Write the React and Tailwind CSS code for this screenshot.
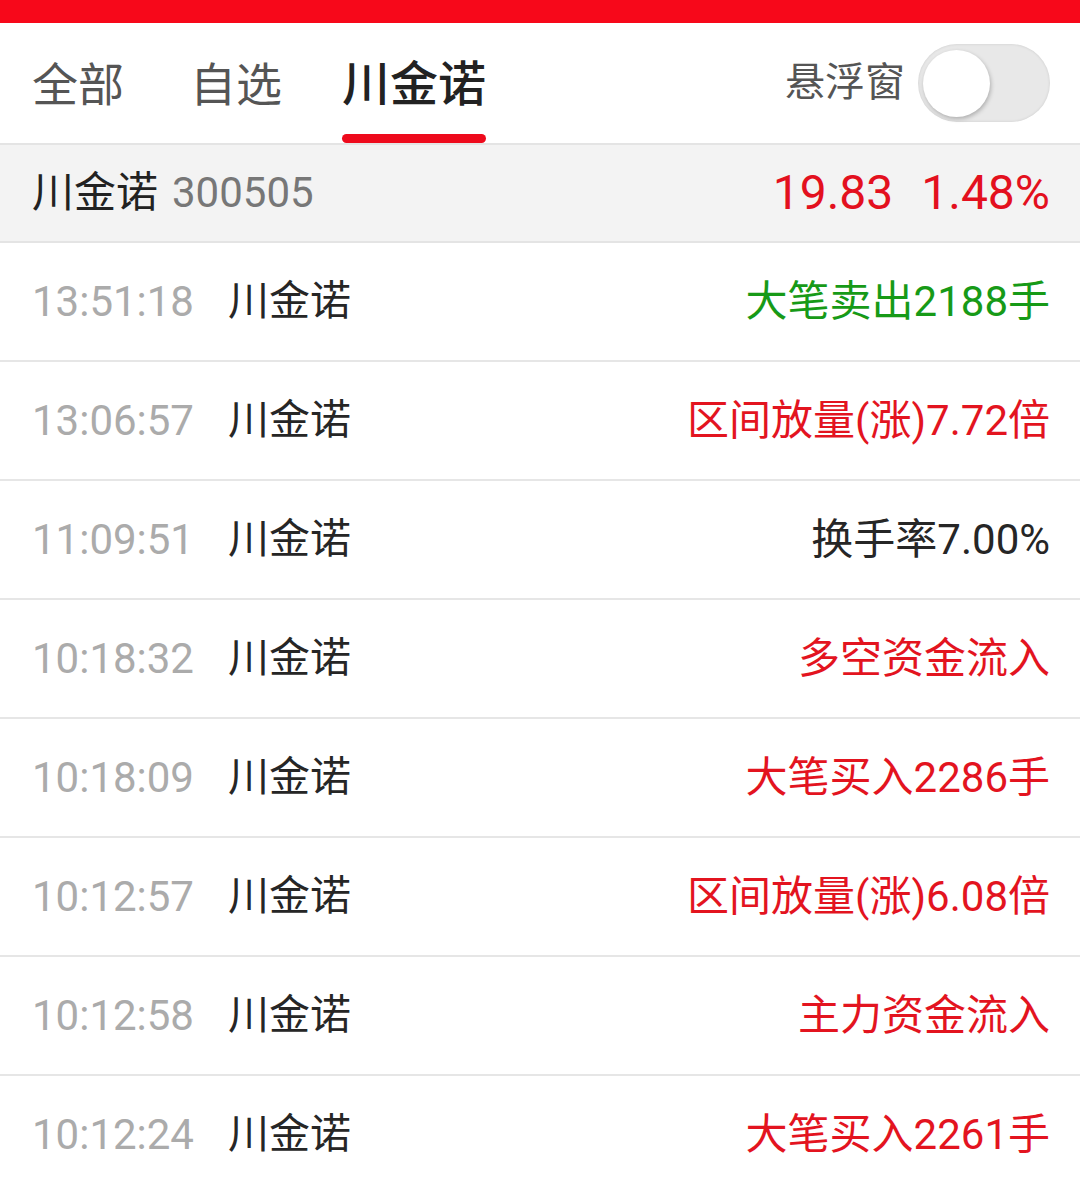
import React from "react";

const rows = [
  { t: "13:51:18", msg: "大笔卖出2188手", c: "text-[#179a17]" },
  { t: "13:06:57", msg: "区间放量(涨)7.72倍", c: "text-[#e3141f]" },
  { t: "11:09:51", msg: "换手率7.00%", c: "text-[#262626]" },
  { t: "10:18:32", msg: "多空资金流入", c: "text-[#e3141f]" },
  { t: "10:18:09", msg: "大笔买入2286手", c: "text-[#e3141f]" },
  { t: "10:12:57", msg: "区间放量(涨)6.08倍", c: "text-[#e3141f]" },
  { t: "10:12:58", msg: "主力资金流入", c: "text-[#e3141f]" },
  { t: "10:12:24", msg: "大笔买入2261手", c: "text-[#e3141f]" },
];

export default function App() {
  return (
    <div
      className="w-[1080px] h-[1192px] overflow-hidden bg-white"
      style={{ fontFamily: 'Roboto, "Noto Sans CJK SC", sans-serif' }}
    >
      <div className="h-[23px] bg-[#f7081a]" />
      <div className="h-[120px] flex items-center pl-[32px] pr-[30px]">
        <div className="mt-[3px] text-[46px] leading-none text-[#555555]">全部</div>
        <div className="mt-[3px] ml-[66px] text-[46px] leading-none text-[#555555]">自选</div>
        <div className="ml-[60px] relative h-full flex items-center">
          <span className="mt-[3px] text-[48px] leading-none font-medium text-[#222222]">川金诺</span>
          <div className="absolute left-0 right-0 bottom-0 h-[9px] rounded-full bg-[#ee0a1c]" />
        </div>
        <div className="ml-auto text-[40px] leading-none text-[#555555]">悬浮窗</div>
        <div className="ml-[13px] w-[132px] h-[78px] rounded-full bg-[#e8e8e8] shadow-[inset_0_0_3px_rgba(0,0,0,0.12)] flex items-center pl-[5px]">
          <div className="w-[67px] h-[67px] rounded-full bg-white shadow-[1px_2px_4px_rgba(0,0,0,0.25)]" />
        </div>
      </div>
      <div className="h-[100px] bg-[#f3f3f3] border-y-2 border-[#e4e4e4] flex items-center pl-[32px] pr-[30px]">
        <span className="text-[42px] leading-none text-[#222222]">川金诺</span>
        <span className="ml-[14px] text-[42px] leading-none text-[#777777]">300505</span>
        <span className="ml-auto text-[48px] leading-none text-[#e3101e]">19.83</span>
        <span className="ml-[28px] text-[48px] leading-none text-[#e3101e]">1.48%</span>
      </div>
      {rows.map((r, i) => (
        <div
          key={i}
          className="h-[119px] border-b-2 border-[#e6e6e6] flex items-center pl-[32px] pr-[30px]"
        >
          <span className="w-[196px] text-[42px] leading-none text-[#ababab]">{r.t}</span>
          <span className="text-[41px] leading-none text-[#262626]">川金诺</span>
          <span className={"ml-auto text-[42px] leading-none " + r.c}>{r.msg}</span>
        </div>
      ))}
    </div>
  );
}
